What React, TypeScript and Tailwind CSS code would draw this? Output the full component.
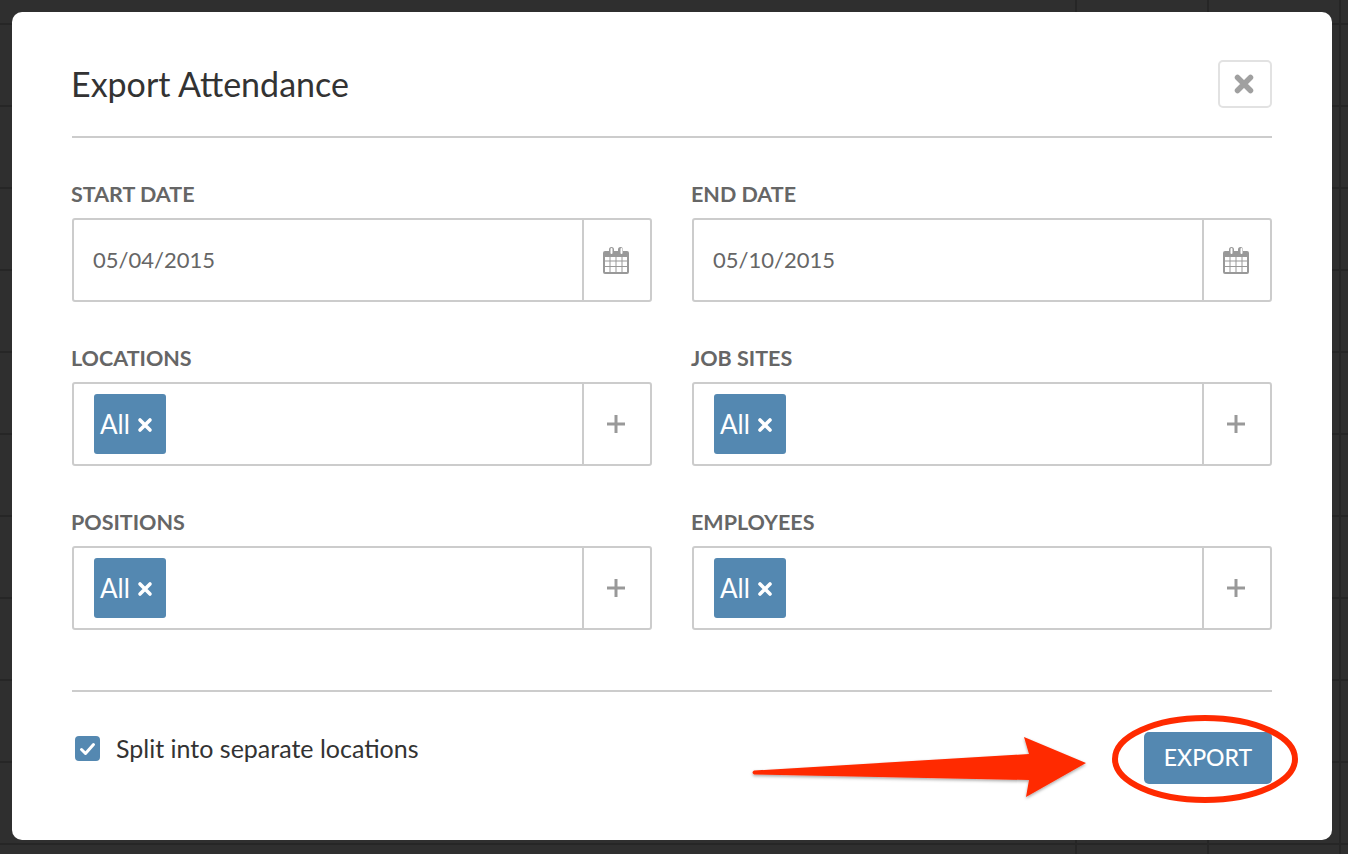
import React from "react";

const Calendar = () => (
  <svg width="26" height="28" viewBox="0 0 26 28" className="mt-[2px] text-[#999]">
    <path fill="currentColor" fillRule="evenodd" d="M2 4h4V2.500a2.500 2.500 0 0 1 5 0V4h4V2.500a2.500 2.500 0 0 1 5 0V4h4a2 2 0 0 1 2 2v19a2 2 0 0 1-2 2H2a2 2 0 0 1-2-2V6a2 2 0 0 1 2-2zM7.500 2v4a1 1 0 0 0 2 0V2a1 1 0 0 0-2 0zm10 0v4a1 1 0 0 0 2 0V2a1 1 0 0 0-2 0zM2 10v3.500h4.500V10zm5.500 0v3.500h5V10zm6 0v3.500h5V10zm6 0v3.500H24V10zM2 14.500V19h4.500v-4.500zm5.500 0V19h5v-4.500zm6 0V19h5v-4.500zm6 0V19H24v-4.500zM2 20v5h4.500v-5zm5.500 0v5h5v-5zm6 0v5h5v-5zm6 0v5H24v-5z" />
  </svg>
);

const Plus = () => (
  <svg width="20" height="20" viewBox="0 0 20 20" className="text-[#999]">
    <path fill="currentColor" d="M8.500 1h3v7.500H19v3h-7.500V19h-3v-7.500H1v-3h7.500z" />
  </svg>
);

const Tag = () => (
  <span className="flex h-[60px] w-[72px] items-center rounded-[3px] bg-[#5488b1] pl-[6px] text-[26px] text-white">
    All
    <svg width="16" height="16" viewBox="0 0 16 16" className="ml-[7px] mt-[2px]">
      <path d="M3 3l10 10m0-10L3 13" stroke="#fff" strokeWidth="3.600" strokeLinecap="round" />
    </svg>
  </span>
);

const Field = ({ label, value }: { label: string; value?: string }) => (
  <div className="flex flex-col">
    <label className="-ml-px mb-[6px] text-[21.5px] font-bold uppercase leading-[36px] text-[#666]">{label}</label>
    <div className="flex h-[84px] rounded-[3px] border-2 border-[#ccc]">
      <div className="flex flex-1 items-center pl-[20px]">
        {value ? <span className="-ml-px -mt-[2px] text-[22px] text-[#666]">{value}</span> : <Tag />}
      </div>
      <div className="flex w-[68px] items-center justify-center border-l-2 border-[#ccc] pr-[2px]">
        {value ? <Calendar /> : <Plus />}
      </div>
    </div>
  </div>
);

export default function App() {
  return (
    <div className="relative h-[854px] w-[1348px] overflow-hidden bg-[#2f2f2f] p-[12px] font-['Lato','Noto_Sans',sans-serif]">
      <div className="absolute inset-0 bg-[linear-gradient(to_bottom,#262626_2px,transparent_2px)] bg-[size:100%_82px] bg-[position:0_23px]" />
      <div className="absolute inset-y-0 left-[1075px] right-0 bg-[linear-gradient(to_right,#262626_2px,transparent_2px)] bg-[size:132px_100%]" />
      <div className="relative flex h-[828px] w-[1320px] flex-col rounded-[10px] bg-white px-[60px]">
        <header className="flex h-[126px] shrink-0 items-center justify-between border-b-2 border-[#ccc] pt-[48px] pb-[28px]">
          <h1 className="-ml-px text-[34px] leading-none text-[#333]">Export Attendance</h1>
          <button className="flex h-[48px] w-[54px] items-center justify-center rounded-[5px] border-2 border-[#e2e2e2] pr-[2px]">
            <svg width="20" height="20" viewBox="0 0 20 20">
              <path d="M3.500 3.500l13 13m0-13l-13 13" stroke="#a0a0a0" strokeWidth="5.500" strokeLinecap="round" />
            </svg>
          </button>
        </header>
        <div className="mt-[38px] grid grid-cols-2 gap-x-[40px] gap-y-[38px]">
          <Field label="Start Date" value="05/04/2015" />
          <Field label="End Date" value="05/10/2015" />
          <Field label="Locations" />
          <Field label="Job Sites" />
          <Field label="Positions" />
          <Field label="Employees" />
        </div>
        <footer className="mt-[60px] flex flex-1 items-start justify-between border-t-2 border-[#ccc] pt-[40px]">
          <label className="ml-[3px] mt-[4px] flex items-center">
            <span className="flex h-[25px] w-[25px] items-center justify-center rounded-[4px] bg-[#5488b1]">
              <svg width="17" height="14" viewBox="0 0 17 14">
                <path d="M2.500 7.500l4 4 8-9" fill="none" stroke="#fff" strokeWidth="3" strokeLinecap="round" strokeLinejoin="round" />
              </svg>
            </span>
            <span className="ml-[16px] text-[25px] leading-none text-[#333]">Split into separate locations</span>
          </label>
          <button className="flex h-[52px] w-[128px] items-center justify-center rounded-[5px] bg-[#5488b1] pb-[2px] text-[23px] font-medium text-white">EXPORT</button>
        </footer>
      </div>
      <svg className="absolute left-0 top-0" width="1348" height="854" viewBox="0 0 1348 854">
        <defs>
          <filter id="s" x="-10%" y="-30%" width="120%" height="160%">
            <feDropShadow dx="0" dy="1.500" stdDeviation="1.500" floodColor="#000" floodOpacity="0.35" />
          </filter>
        </defs>
        <path filter="url(#s)" fill="#ff2a00" d="M754 770.500 L1029 754 L1024 737 L1086 763 L1026 797 L1029 780 L754 774.500 Q751 772.500 754 770.500z" />
        <ellipse cx="1205" cy="759" rx="90" ry="41" fill="none" stroke="#ff2a00" strokeWidth="6" />
      </svg>
    </div>
  );
}
